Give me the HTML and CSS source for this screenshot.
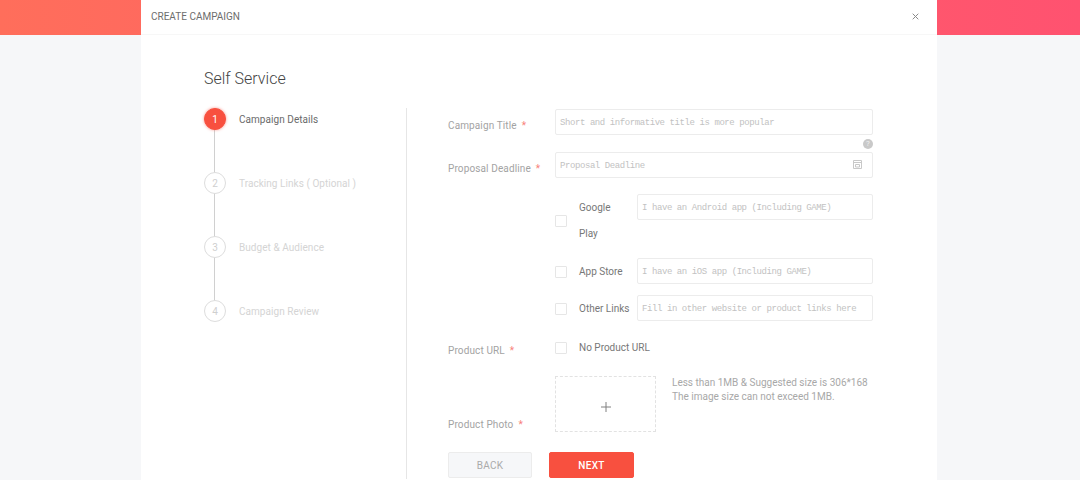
FILE: index.html
```html
<!DOCTYPE html>
<html lang="en">
<head>
<meta charset="utf-8">
<title>Create Campaign</title>
<link rel="stylesheet" href="styles.css">
</head>
<body>
<div class="band"></div>
<main class="modal">
  <header class="modal-head">
    <span class="modal-title">CREATE CAMPAIGN</span>
    <svg class="close" width="7" height="7" viewBox="0 0 7 7"><path d="M.7.7l5.6 5.6M6.3.7L.7 6.3" stroke="#8a8a8a" stroke-width="1" fill="none"/></svg>
  </header>
  <div class="modal-body">
    <h1 class="page-title">Self Service</h1>
    <div class="columns">
      <ol class="steps">
        <li class="step active"><span class="dot">1</span><span class="step-name">Campaign Details</span></li>
        <li class="step"><span class="dot">2</span><span class="step-name">Tracking Links ( Optional )</span></li>
        <li class="step"><span class="dot">3</span><span class="step-name">Budget &amp; Audience</span></li>
        <li class="step last"><span class="dot">4</span><span class="step-name">Campaign Review</span></li>
      </ol>
      <form class="form">
        <div class="row row-title">
          <label class="label">Campaign Title<i>*</i></label>
          <div class="field">
            <div class="input"><span class="ph">Short and informative title is more popular</span></div>
            <span class="help">?</span>
          </div>
        </div>
        <div class="row row-deadline">
          <label class="label">Proposal Deadline<i>*</i></label>
          <div class="field">
            <div class="input"><span class="ph">Proposal Deadline</span>
              <svg class="cal" width="9" height="9" viewBox="0 0 9 9"><path d="M.5.5h8v8h-8zM.5 2.5h8M2.5 4.5h4v2.5h-4z" fill="none" stroke="#c8c8c8"/></svg>
            </div>
          </div>
        </div>
        <div class="row row-google">
          <span class="label"></span>
          <div class="field link-row">
            <span class="check"></span>
            <span class="link-name wrap">Google Play</span>
            <div class="input link-input"><span class="ph">I have an Android app (Including GAME)</span></div>
          </div>
        </div>
        <div class="row row-app">
          <span class="label"></span>
          <div class="field link-row">
            <span class="check"></span>
            <span class="link-name">App Store</span>
            <div class="input link-input"><span class="ph">I have an iOS app (Including GAME)</span></div>
          </div>
        </div>
        <div class="row row-other">
          <span class="label"></span>
          <div class="field link-row">
            <span class="check"></span>
            <span class="link-name">Other Links</span>
            <div class="input link-input"><span class="ph">Fill in other website or product links here</span></div>
          </div>
        </div>
        <div class="row row-url">
          <label class="label">Product URL<i>*</i></label>
          <div class="field no-url">
            <span class="check"></span>
            <span class="link-name">No Product URL</span>
          </div>
        </div>
        <div class="row row-photo">
          <label class="label">Product Photo<i>*</i></label>
          <div class="field upload-wrap">
            <div class="upload">
              <svg width="10" height="10" viewBox="0 0 10 10"><path d="M5 0v10M0 5h10" stroke="#808080" stroke-width="1" fill="none"/></svg>
            </div>
            <p class="hint">Less than 1MB &amp; Suggested size is 306*168<br>The image size can not exceed 1MB.</p>
          </div>
        </div>
        <div class="actions">
          <button type="button" class="btn back">BACK</button>
          <button type="button" class="btn next">NEXT</button>
        </div>
      </form>
    </div>
  </div>
</main>
</body>
</html>
```
FILE: styles.css
```css
* { box-sizing: border-box; }
html, body { margin: 0; height: 480px; overflow: hidden; }
body {
  position: relative;
  background: #f6f7f9;
  font-family: "Roboto", "Liberation Sans", sans-serif;
  font-size: 10px;
  color: #666;
}
.band {
  position: absolute;
  left: 0; right: 0; top: 0;
  height: 35px;
  background: linear-gradient(90deg, #ff6e5b 0%, #ff5270 100%);
}
.modal {
  position: relative;
  width: 796px;
  height: 480px;
  margin-left: 141px;
  background: #fff;
}
.modal-head {
  height: 35px;
  display: flex;
  align-items: center;
  justify-content: space-between;
  padding: 0 18px 2px 10px;
  border-bottom: 1px solid #f7f7f7;
}
.modal-title { font-size: 10px; letter-spacing: 0; color: #6d6d6d; }
.close { display: block; }
.modal-body { padding: 34px 0 0 63px; }
.page-title {
  margin: 0;
  font-size: 16px;
  font-weight: 300;
  line-height: 19px;
  letter-spacing: 0;
  color: #444;
}
.columns { display: flex; margin-top: 20px; }
.steps {
  list-style: none;
  margin: 0;
  padding: 0;
  width: 203px;
  height: 371px;
  border-right: 1px solid #e6e6e6;
}
.step {
  position: relative;
  display: flex;
  align-items: flex-start;
  height: 64px;
  color: #d4d4d4;
}
.step::before {
  content: "";
  position: absolute;
  left: 10px;
  top: 20px;
  width: 1px;
  height: 46px;
  background: #d0d0d0;
}
.step.last::before { display: none; }
.dot {
  position: relative;
  flex: none;
  width: 22px;
  height: 22px;
  border-radius: 50%;
  border: 1px solid #ddd;
  background: #fff;
  display: flex;
  align-items: center;
  justify-content: center;
  font-size: 10px;
  color: #cfcfcf;
}
.step-name { margin-left: 13px; padding-top: 2px; line-height: 20px; letter-spacing: .05px; }
.step-name { height: 22px; }
.active .dot {
  background: #f8503f;
  border-color: #f8503f;
  color: #fff;
  box-shadow: 0 0 3px rgba(248, 80, 63, .6);
}
.active .step-name { color: #6a6a6a; }
.form { margin-left: 41px; width: 425px; padding-top: 1px; }
.row { display: flex; align-items: flex-start; }
.label {
  flex: none;
  width: 107px;
  padding-top: 10px;
  line-height: 14px;
  color: #a3a3a3;
  letter-spacing: .12px;
}
.label i { font-style: normal; color: #f8807a; margin-left: 5px; }
.field { position: relative; width: 318px; }
.input {
  position: relative;
  height: 26px;
  border: 1px solid #ececec;
  border-radius: 2px;
  padding: 1px 0 0 4px;
  display: flex;
  align-items: center;
  background: #fff;
}
.ph {
  font-family: "Liberation Mono", monospace;
  font-size: 9px;
  letter-spacing: -.42px;
  color: #c2c2c2;
  white-space: nowrap;
}
.help {
  position: absolute;
  right: 0;
  top: 30px;
  width: 10px;
  height: 10px;
  border-radius: 50%;
  background: #c9c9c9;
  color: #f0f0f0;
  font-size: 8px;
  line-height: 10px;
  text-align: center;
}
.cal { position: absolute; right: 10px; top: 7px; }
.row-deadline { margin-top: 17px; }
.row-google { margin-top: 16px; }
.row-app { margin-top: 12px; }
.row-other { margin-top: 11px; }
.row-url { margin-top: 21px; }
.row-photo { margin-top: 18px; align-items: flex-end; }
.link-row { display: flex; align-items: center; padding-top: 2px; }
.check {
  flex: none;
  width: 12px;
  height: 12px;
  border: 1px solid #e6e6e6;
  border-radius: 1px;
  background: #fff;
}
.link-name {
  margin-left: 12px;
  color: #777;
  white-space: nowrap;
  line-height: 26px;
}
.link-name.wrap { white-space: normal; width: 46px; }
.link-input { position: absolute; left: 82px; right: 0; top: 0; }
.row-google .field { height: 52px; }
.row-app .field, .row-other .field { height: 26px; }
.no-url { display: flex; align-items: center; height: 12px; }
.row-url .label { padding-top: 0; margin-top: 2px; }
.upload-wrap { display: flex; align-items: flex-start; }
.upload {
  flex: none;
  width: 101px;
  height: 56px;
  padding-top: 6px;
  border: 1px dashed #e2e2e2;
  display: flex;
  align-items: center;
  justify-content: center;
}
.hint {
  margin: 0 0 0 16px;
  line-height: 14px;
  color: #a8a8a8;
  letter-spacing: 0;
  white-space: nowrap;
}
.row-photo .label { padding: 0; }
.actions { display: flex; gap: 17px; margin-top: 20px; }
.btn {
  width: 84px;
  height: 26px;
  border-radius: 2px;
  font: 10px "Roboto", "Liberation Sans", sans-serif;
  letter-spacing: .3px;
  padding: 0;
}
.back { background: #f6f7f9; border: 1px solid #ececec; color: #aaa; }
.next { background: #f8503f; border: 1px solid #f8503f; color: #fff; font-weight: 500; width: 85px; }
```
